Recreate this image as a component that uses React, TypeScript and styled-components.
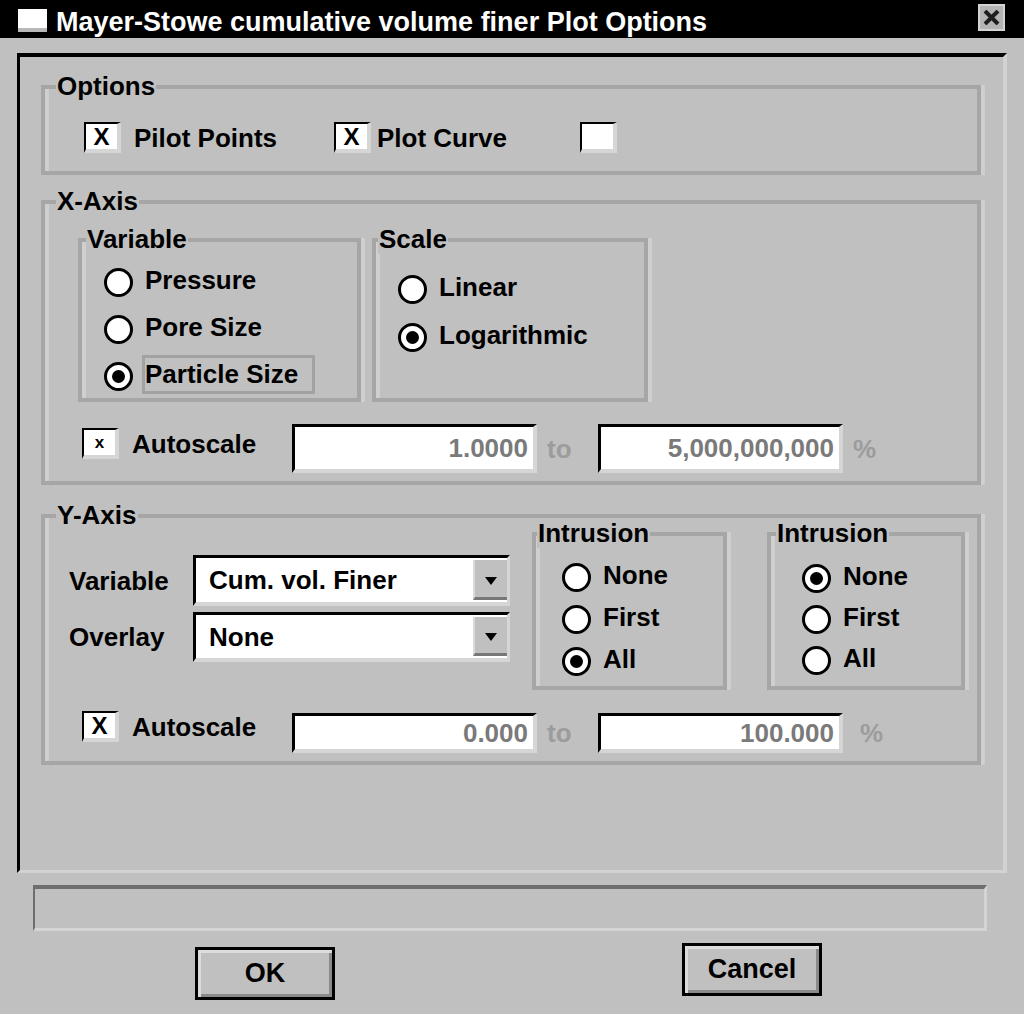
import React from "react";
import styled, {createGlobalStyle} from "styled-components";

const GlobalStyle = createGlobalStyle`
    * { box-sizing: border-box; }
    html, body {
        margin: 0;
        padding: 0;
        background: #c0c0c0;
    }
    body {
        font-family: "Liberation Sans", Arial, sans-serif;
        font-weight: bold;
        color: #000;
    }
`;

const StyledWindow = styled.div`
    width: 1024px;
    height: 1014px;
    overflow: hidden;
    background: #c0c0c0;
    display: flex;
    flex-direction: column;
`;

const StyledTitleBar = styled.div`
    height: 38px;
    flex-shrink: 0;
    background: #000;
    display: flex;
    align-items: center;
    padding: 0 19px 0 18px;
`;

const StyledWindowIcon = styled.div`
    width: 29px;
    height: 23px;
    margin-top: 3px;
    background: #fff;
    border-bottom: 4px solid #b8b8b8;
`;

const StyledTitle = styled.div`
    color: #fff;
    font-size: 27px;
    line-height: 30px;
    margin: 5px 0 0 9px;
    white-space: nowrap;
`;

const StyledClose = styled.div`
    margin-left: auto;
    margin-top: -3px;
    width: 27px;
    height: 27px;
    background: #b4b4b4;
    border: 2px solid #d4d4d4;
    display: flex;
    align-items: center;
    justify-content: center;
`;

const StyledBody = styled.div`
    padding: 15px 0 0 17px;
`;

const StyledPanel = styled.div`
    width: 990px;
    height: 820px;
    border-top: 4px solid #000;
    border-left: 3px solid #000;
    border-right: 4px solid #d2d2d2;
    border-bottom: 3px solid #d2d2d2;
    padding: 28px 0 0 21px;
    display: flex;
    flex-direction: column;
`;

const StyledGroup = styled.div<{ $w: number; $h: number; $mt?: number; $ml?: number }>`
    position: relative;
    flex-shrink: 0;
    width: ${p => p.$w}px;
    height: ${p => p.$h}px;
    margin-top: ${p => p.$mt ?? 0}px;
    margin-left: ${p => p.$ml ?? 0}px;
    border: 4px solid #a6a6a6;
    box-shadow: inset 4px 0 0 #cfcfcf, 4px 0 0 #cfcfcf;
`;

const StyledLegend = styled.span<{ $left: number }>`
    position: absolute;
    top: -18px;
    left: ${p => p.$left}px;
    padding: 0 1px;
    background: #c0c0c0;
    font-size: 26px;
    line-height: 30px;
    white-space: nowrap;
`;

const StyledOptionsRow = styled.div`
    display: flex;
    align-items: center;
    padding: 33px 0 0 39px;
`;

const StyledCheckItem = styled.div<{ $w?: number; $mt?: number }>`
    display: flex;
    align-items: center;
    flex-shrink: 0;
    width: ${p => (p.$w ? `${p.$w}px` : "auto")};
    margin-top: ${p => p.$mt ?? 0}px;
`;

const StyledCheckBox = styled.span<{ $small?: boolean }>`
    width: 37px;
    height: 31px;
    flex-shrink: 0;
    background: #fff;
    border-top: 2px solid #000;
    border-left: 2px solid #000;
    border-right: 4px solid #d6d6d6;
    border-bottom: 4px solid #d6d6d6;
    display: flex;
    align-items: center;
    justify-content: center;
    font-size: ${p => (p.$small ? 17 : 24)}px;
    line-height: 1;
`;

const StyledCheckText = styled.span<{ $gap: number }>`
    margin-left: ${p => p.$gap}px;
    font-size: 26px;
    line-height: 30px;
    white-space: nowrap;
`;

const StyledSubRow = styled.div`
    display: flex;
    padding: 34px 0 0 33px;
`;

const StyledRadioList = styled.div<{ $pt: number; $pl: number }>`
    display: flex;
    flex-direction: column;
    padding: ${p => p.$pt}px 0 0 ${p => p.$pl}px;
`;

const StyledRadioRow = styled.div<{ $h: number }>`
    display: flex;
    align-items: center;
    height: ${p => p.$h}px;
`;

const StyledRadio = styled.span`
    width: 29px;
    height: 29px;
    flex-shrink: 0;
    border-radius: 50%;
    border: 3px solid #000;
    background: #fff;
    display: flex;
    align-items: center;
    justify-content: center;
`;

const StyledDot = styled.span`
    width: 13px;
    height: 13px;
    border-radius: 50%;
    background: #000;
`;

const StyledRadioLabel = styled.span<{ $focus?: boolean }>`
    margin: 0 0 4px 9px;
    border: 3px solid ${p => (p.$focus ? "#a2a2a2" : "transparent")};
    padding: 1px 14px 2px 0;
    font-size: 26px;
    line-height: 30px;
    white-space: nowrap;
`;

const StyledAutoRow = styled.div<{ $mt: number }>`
    display: flex;
    align-items: flex-start;
    padding-left: 37px;
    margin-top: ${p => p.$mt}px;
`;

const StyledRange = styled.div<{ $mt?: number }>`
    display: flex;
    align-items: center;
    margin-top: ${p => p.$mt ?? 0}px;
`;

const StyledInput = styled.div<{ $h: number }>`
    width: 245px;
    height: ${p => p.$h}px;
    background: #fff;
    border-top: 3px solid #000;
    border-left: 3px solid #000;
    border-right: 4px solid #d6d6d6;
    border-bottom: 4px solid #d6d6d6;
    display: flex;
    align-items: center;
    justify-content: flex-end;
    padding-right: 5px;
    color: #7a7a7a;
    font-size: 26px;
    line-height: 30px;
`;

const StyledDim = styled.span<{ $w?: number; $ml: number }>`
    width: ${p => (p.$w ? `${p.$w}px` : "auto")};
    padding-left: ${p => p.$ml}px;
    color: #9c9c9c;
    font-size: 26px;
    line-height: 30px;
`;

const StyledYTop = styled.div`
    display: flex;
    align-items: flex-start;
`;

const StyledSelectColumn = styled.div`
    display: flex;
    flex-direction: column;
    gap: 6px;
    padding: 37px 0 0 24px;
`;

const StyledSelectRow = styled.div`
    display: flex;
    align-items: center;
`;

const StyledFieldLabel = styled.span`
    width: 124px;
    font-size: 26px;
    line-height: 30px;
`;

const StyledSelect = styled.div<{ $h: number }>`
    width: 317px;
    height: ${p => p.$h}px;
    background: #fff;
    border-top: 3px solid #000;
    border-left: 3px solid #000;
    border-right: 3px solid #d6d6d6;
    border-bottom: 4px solid #d6d6d6;
    display: flex;
`;

const StyledSelectText = styled.span`
    flex: 1;
    padding-left: 13px;
    display: flex;
    align-items: center;
    font-size: 26px;
    line-height: 30px;
`;

const StyledArrowBox = styled.span`
    width: 34px;
    margin: 2px 0 2px 0;
    background: #c0c0c0;
    border-left: 2px solid #dadada;
    border-bottom: 3px solid #777;
    display: flex;
    align-items: center;
    justify-content: center;
    padding-top: 4px;
`;

const StyledStatusBar = styled.div`
    width: 954px;
    height: 46px;
    margin: 12px 0 0 33px;
    border-top: 4px solid #6e6e6e;
    border-left: 2px solid #6e6e6e;
    border-right: 3px solid #d4d4d4;
    border-bottom: 3px solid #d4d4d4;
`;

const StyledButtonRow = styled.div`
    display: flex;
    align-items: flex-start;
    gap: 347px;
    padding-left: 195px;
    margin-top: 12px;
`;

const StyledButton = styled.button<{ $drop?: number }>`
    width: 140px;
    height: 53px;
    margin-top: ${p => p.$drop ?? 0}px;
    background: #c0c0c0;
    border: 3px solid #000;
    box-shadow: inset 3px 3px 0 #dcdcdc, inset -3px -3px 0 #8a8a8a;
    font-family: "Liberation Sans Narrow", "Liberation Sans", Arial, sans-serif;
    font-weight: bold;
    font-size: 27px;
    color: #000;
    padding: 0;
`;

const CheckOption = ({label, gap, w, small, mark = "X", mt}: {
    label?: string; gap?: number; w?: number; small?: boolean; mark?: string; mt?: number;
}) => (
    <StyledCheckItem $w={w} $mt={mt}>
        <StyledCheckBox $small={small}>{mark}</StyledCheckBox>
        {label && <StyledCheckText $gap={gap ?? 13}>{label}</StyledCheckText>}
    </StyledCheckItem>
);

type RadioItem = { label: string; on?: boolean; focus?: boolean };

const RadioGroup = ({items, h, pt, pl}: { items: RadioItem[]; h: number; pt: number; pl: number }) => (
    <StyledRadioList $pt={pt} $pl={pl}>
        {items.map(item =>
            <StyledRadioRow key={item.label} $h={h}>
                <StyledRadio>{item.on && <StyledDot />}</StyledRadio>
                <StyledRadioLabel $focus={item.focus}>{item.label}</StyledRadioLabel>
            </StyledRadioRow>
        )}
    </StyledRadioList>
);

const Arrow = () => (
    <svg width="12" height="8" viewBox="0 0 12 8">
        <path d="M0 0 L12 0 L6 8 Z" fill="#000" />
    </svg>
);

const Range = ({from, to, h, mt, pct}: { from: string; to: string; h: number; mt?: number; pct: number }) => (
    <StyledRange $mt={mt}>
        <StyledInput $h={h}>{from}</StyledInput>
        <StyledDim $w={61} $ml={10}>to</StyledDim>
        <StyledInput $h={h}>{to}</StyledInput>
        <StyledDim $ml={pct}>%</StyledDim>
    </StyledRange>
);

const App = () => {
    return (
        <StyledWindow>
            <GlobalStyle />
            <StyledTitleBar>
                <StyledWindowIcon />
                <StyledTitle>Mayer-Stowe cumulative volume finer Plot Options</StyledTitle>
                <StyledClose>
                    <svg width="17" height="15" viewBox="0 0 17 15">
                        <path d="M2 1 L15 14 M15 1 L2 14" stroke="#1e1e1e" strokeWidth="4" />
                    </svg>
                </StyledClose>
            </StyledTitleBar>

            <StyledBody>
                <StyledPanel>
                    <StyledGroup $w={940} $h={90}>
                        <StyledLegend $left={11}>Options</StyledLegend>
                        <StyledOptionsRow>
                            <CheckOption label="Pilot Points" w={250} gap={13} />
                            <CheckOption label="Plot Curve" w={246} gap={6} />
                            <CheckOption mark="" />
                        </StyledOptionsRow>
                    </StyledGroup>

                    <StyledGroup $w={940} $h={285} $mt={25}>
                        <StyledLegend $left={11}>X-Axis</StyledLegend>
                        <StyledSubRow>
                            <StyledGroup $w={283} $h={164}>
                                <StyledLegend $left={4}>Variable</StyledLegend>
                                <RadioGroup h={47} pt={17} pl={22} items={[
                                    {label: "Pressure"},
                                    {label: "Pore Size"},
                                    {label: "Particle Size", on: true, focus: true},
                                ]} />
                            </StyledGroup>
                            <StyledGroup $w={276} $h={164} $ml={11}>
                                <StyledLegend $left={2}>Scale</StyledLegend>
                                <RadioGroup h={48} pt={23} pl={22} items={[
                                    {label: "Linear"},
                                    {label: "Logarithmic", on: true},
                                ]} />
                            </StyledGroup>
                        </StyledSubRow>
                        <StyledAutoRow $mt={22}>
                            <CheckOption label="Autoscale" w={210} gap={13} small mark="x" mt={4} />
                            <Range from="1.0000" to="5,000,000,000" h={49} pct={10} />
                        </StyledAutoRow>
                    </StyledGroup>

                    <StyledGroup $w={940} $h={251} $mt={29}>
                        <StyledLegend $left={11}>Y-Axis</StyledLegend>
                        <StyledYTop>
                            <StyledSelectColumn>
                                <StyledSelectRow>
                                    <StyledFieldLabel>Variable</StyledFieldLabel>
                                    <StyledSelect $h={51}>
                                        <StyledSelectText>Cum. vol. Finer</StyledSelectText>
                                        <StyledArrowBox><Arrow /></StyledArrowBox>
                                    </StyledSelect>
                                </StyledSelectRow>
                                <StyledSelectRow>
                                    <StyledFieldLabel>Overlay</StyledFieldLabel>
                                    <StyledSelect $h={50}>
                                        <StyledSelectText>None</StyledSelectText>
                                        <StyledArrowBox><Arrow /></StyledArrowBox>
                                    </StyledSelect>
                                </StyledSelectRow>
                            </StyledSelectColumn>
                            <StyledGroup $w={195} $h={158} $mt={14} $ml={22}>
                                <StyledLegend $left={1}>Intrusion</StyledLegend>
                                <RadioGroup h={42} pt={20} pl={26} items={[
                                    {label: "None"},
                                    {label: "First"},
                                    {label: "All", on: true},
                                ]} />
                            </StyledGroup>
                            <StyledGroup $w={198} $h={158} $mt={14} $ml={40}>
                                <StyledLegend $left={5}>Intrusion</StyledLegend>
                                <RadioGroup h={41} pt={22} pl={31} items={[
                                    {label: "None", on: true},
                                    {label: "First"},
                                    {label: "All"},
                                ]} />
                            </StyledGroup>
                        </StyledYTop>
                        <StyledAutoRow $mt={21}>
                            <CheckOption label="Autoscale" w={210} gap={13} />
                            <Range from="0.000" to="100.000" h={40} mt={2} pct={17} />
                        </StyledAutoRow>
                    </StyledGroup>
                </StyledPanel>
            </StyledBody>

            <StyledStatusBar />

            <StyledButtonRow>
                <StyledButton $drop={4}>OK</StyledButton>
                <StyledButton>Cancel</StyledButton>
            </StyledButtonRow>
        </StyledWindow>
    );
};

export default App;
